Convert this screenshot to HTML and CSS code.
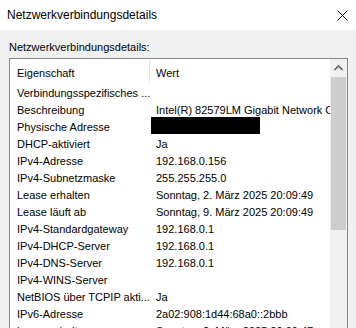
FILE: index.html
```html
<!DOCTYPE html>
<html lang="de">
<head>
    <meta charset="UTF-8">
    <meta name="viewport" content="width=device-width, initial-scale=1.0">
    <title>Netzwerkverbindungsdetails</title>
    <link rel="stylesheet" href="styles.css">
</head>
<body>

<div class="dialog">
    <div class="titlebar">
        <span class="title">Netzwerkverbindungsdetails</span>
        <svg class="close" width="11" height="11" viewBox="0 0 11 11">
            <path d="M0.5 0.5 L10.5 10.5 M10.5 0.5 L0.5 10.5" stroke="#000" stroke-width="1" fill="none"/>
        </svg>
    </div>

    <div class="content">
        <div class="label">Netzwerkverbindungsdetails:</div>

        <div class="listview">
            <div class="list-area">
                <div class="row header">
                    <div class="cell name">Eigenschaft</div>
                    <div class="cell value">Wert</div>
                </div>
                <div class="row"><div class="cell name">Verbindungsspezifisches ...</div><div class="cell value"></div></div>
                <div class="row"><div class="cell name">Beschreibung</div><div class="cell value">Intel(R) 82579LM Gigabit Network Connection</div></div>
                <div class="row"><div class="cell name">Physische Adresse</div><div class="cell value"><span class="redacted"></span></div></div>
                <div class="row"><div class="cell name">DHCP-aktiviert</div><div class="cell value">Ja</div></div>
                <div class="row"><div class="cell name">IPv4-Adresse</div><div class="cell value">192.168.0.156</div></div>
                <div class="row"><div class="cell name">IPv4-Subnetzmaske</div><div class="cell value">255.255.255.0</div></div>
                <div class="row"><div class="cell name">Lease erhalten</div><div class="cell value">Sonntag, 2. März 2025 20:09:49</div></div>
                <div class="row"><div class="cell name">Lease läuft ab</div><div class="cell value">Sonntag, 9. März 2025 20:09:49</div></div>
                <div class="row"><div class="cell name">IPv4-Standardgateway</div><div class="cell value">192.168.0.1</div></div>
                <div class="row"><div class="cell name">IPv4-DHCP-Server</div><div class="cell value">192.168.0.1</div></div>
                <div class="row"><div class="cell name">IPv4-DNS-Server</div><div class="cell value">192.168.0.1</div></div>
                <div class="row"><div class="cell name">IPv4-WINS-Server</div><div class="cell value"></div></div>
                <div class="row"><div class="cell name">NetBIOS über TCPIP akti...</div><div class="cell value">Ja</div></div>
                <div class="row"><div class="cell name">IPv6-Adresse</div><div class="cell value">2a02:908:1d44:68a0::2bbb</div></div>
                <div class="row"><div class="cell name">Lease erhalten</div><div class="cell value">Sonntag, 2. März 2025 20:09:47</div></div>
            </div>

            <div class="scrollbar">
                <div class="arrow">
                    <svg width="9" height="6" viewBox="0 0 9 6">
                        <path d="M0.5 5 L4.5 1 L8.5 5" stroke="#606060" stroke-width="1.6" fill="none"/>
                    </svg>
                </div>
                <div class="thumb"></div>
            </div>
        </div>
    </div>
</div>

</body>
</html>
```

FILE: styles.css
```css
html, body {
    margin: 0;
    padding: 0;
    height: 100%;
    overflow: hidden;
}

body {
    font-family: "Liberation Sans", Arial, sans-serif;
    font-size: 11px;
    color: #000;
    background-color: #f0f0f0;
}

.dialog {
    width: 356px;
    height: 328px;
    display: flex;
    flex-direction: column;
}

.titlebar {
    height: 30px;
    background-color: #fff;
    display: flex;
    align-items: center;
    justify-content: space-between;
    padding: 0 8px 0 7px;
    flex-shrink: 0;
}

.title {
    font-size: 12px;
    line-height: 15px;
    padding-top: 1px;
}

.close {
    display: block;
    margin-top: 1px;
}

.content {
    flex: 1;
    padding: 10px 8px 0 9px;
    display: flex;
    flex-direction: column;
    min-height: 0;
}

.label {
    line-height: 15px;
    margin-bottom: 3px;
}

.listview {
    flex: 1;
    border: 1px solid #828790;
    border-bottom: none;
    background-color: #fff;
    display: flex;
    min-height: 0;
    overflow: hidden;
}

.list-area {
    flex: 1;
    min-width: 0;
    overflow: hidden;
}

.row {
    display: flex;
    height: 17px;
    line-height: 17px;
    white-space: nowrap;
}

.row .cell {
    padding-top: 2px;
    box-sizing: border-box;
    overflow: hidden;
}

.cell.name {
    width: 140px;
    flex-shrink: 0;
    padding-left: 7px;
}

.cell.value {
    flex: 1;
    padding-left: 6px;
}

.row.header {
    height: 24px;
    line-height: 22px;
}

.row.header .cell {
    padding-top: 3px;
}

.row.header .cell.name {
    border-right: 1px solid #e5e5e5;
    margin-top: 1px;
    padding-top: 2px;
}

.redacted {
    display: block;
    width: 109px;
    height: 17px;
    margin-left: -5px;
    margin-top: -2px;
    background-color: #000;
}

.scrollbar {
    width: 17px;
    flex-shrink: 0;
    background-color: #f0f0f0;
    display: flex;
    flex-direction: column;
}

.arrow {
    height: 17px;
    display: flex;
    align-items: center;
    justify-content: center;
}

.arrow svg {
    display: block;
}

.thumb {
    height: 153px;
    margin: 1px 1px 0 1px;
    background-color: #cdcdcd;
}
```
